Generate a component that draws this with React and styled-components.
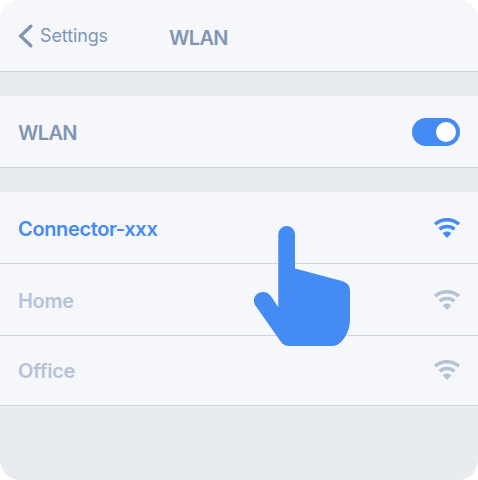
import React from "react";
import styled, { createGlobalStyle } from "styled-components";

const GlobalStyle = createGlobalStyle`
  * { box-sizing: border-box; }
  body { margin: 0; background: #fff; }
`;

const Screen = styled.main`
  position: relative;
  display: flex;
  flex-direction: column;
  gap: 24px;
  width: 478px;
  height: 480px;
  overflow: hidden;
  border-radius: 20px;
  background: #e8ebf0;
  font-family: Inter, "Liberation Sans", sans-serif;
  color: #8095b4;
`;

const Header = styled.header`
  display: grid;
  grid-template-columns: 169px 1fr;
  align-items: center;
  height: 72px;
  padding: 2px 0 0;
  background: #f5f7fb;
  border-bottom: 1px solid #cfd5dd;
`;

const BackButton = styled.button`
  display: flex;
  align-items: center;
  gap: 7px;
  padding: 0 0 2px 18px;
  border: 0;
  background: none;
  color: inherit;
  font: 400 18px/24px Inter, "Liberation Sans", sans-serif;
  letter-spacing: -0.12px;
`;

const Title = styled.h1`
  margin: 2px 0 0;
  font-size: 20px;
  line-height: 24px;
  font-weight: 600;
  letter-spacing: -0.65px;
`;

const Group = styled.section`
  display: flex;
  flex-direction: column;
`;

const Row = styled.div`
  display: flex;
  align-items: center;
  justify-content: space-between;
  height: ${({ $height = 72 }) => $height}px;
  padding: ${({ $height = 72 }) => ($height < 72 ? "0 18px 1px" : "1px 18px 0")};
  background: #f5f7fb;
  border-bottom: 1px solid #cfd5dd;
  color: ${({ $color }) => $color};
`;

const Label = styled.span`
  margin-top: 2px;
  font-size: 20px;
  line-height: 24px;
  font-weight: ${({ $weight = 600 }) => $weight};
  letter-spacing: ${({ $tracking = 0 }) => $tracking}px;
`;

const Toggle = styled.button`
  display: flex;
  justify-content: flex-end;
  align-items: center;
  width: 48px;
  height: 28px;
  padding: 0 4px;
  border: 0;
  border-radius: 14px;
  background: #448bf3;
`;

const Knob = styled.span`
  width: 20px;
  height: 20px;
  border-radius: 50%;
  background: #fff;
`;

const Pointer = styled.svg`
  position: absolute;
  left: 253px;
  top: 225px;
  fill: #448bf3;
`;

const Chevron = () => (
  <svg width="15" height="24" viewBox="0 0 15 24" fill="none" stroke="currentColor" strokeWidth="3.3" strokeLinecap="round" strokeLinejoin="miter">
    <path d="M12.8 2.2 2.6 12 12.8 21.8" />
  </svg>
);

const Wifi = () => (
  <svg width="26" height="20" viewBox="0 0 26 20" fill="none" stroke="currentColor" strokeWidth="3.5">
    <path d="M1.1 6.2C7.6.2 18.4.2 24.9 6.2" />
    <path d="M5.6 11.2C9.8 7.5 16.2 7.5 20.4 11.2" />
    <path d="M9.3 14.8C11.4 13.1 14.6 13.1 16.7 14.8 17.1 15.1 17.1 15.6 16.8 15.9L13.7 19.3Q13 20 12.3 19.3L9.2 15.9C8.9 15.6 8.9 15.1 9.3 14.8Z" fill="currentColor" stroke="none" />
  </svg>
);

const networks = [
  { name: "Connector-xxx", color: "#448bf3", height: 72, tracking: -0.36 },
  { name: "Home", color: "#b6c3d5", height: 72, tracking: -0.3 },
  { name: "Office", color: "#b6c3d5", height: 70, tracking: -0.3 },
];

export default function App() {
  return (
    <>
      <GlobalStyle />
      <Screen>
        <Header>
          <BackButton>
            <Chevron />
            Settings
          </BackButton>
          <Title>WLAN</Title>
        </Header>
        <Group>
          <Row>
            <Label $tracking={-0.65}>WLAN</Label>
            <Toggle role="switch" aria-checked="true" aria-label="WLAN">
              <Knob />
            </Toggle>
          </Row>
        </Group>
        <Group>
          {networks.map(({ name, color, height, tracking }) => (
            <Row key={name} $color={color} $height={height}>
              <Label $tracking={tracking}>{name}</Label>
              <Wifi />
            </Row>
          ))}
        </Group>
        <Pointer width="98" height="122" viewBox="253 225 98 122" aria-hidden="true">
          <path d="M278.3 234.3A8.3 8.3 0 0 1 295 234.3V268.5L342 281Q350 283.5 350 290.5V320C350 331 343 342 337 345Q335 346 332 346H289Q284 346 281 342L255.4 305.5C251.5 299 256 292 263 292Q268 292 271 296.3L278.3 307.3Z" />
        </Pointer>
      </Screen>
    </>
  );
}
